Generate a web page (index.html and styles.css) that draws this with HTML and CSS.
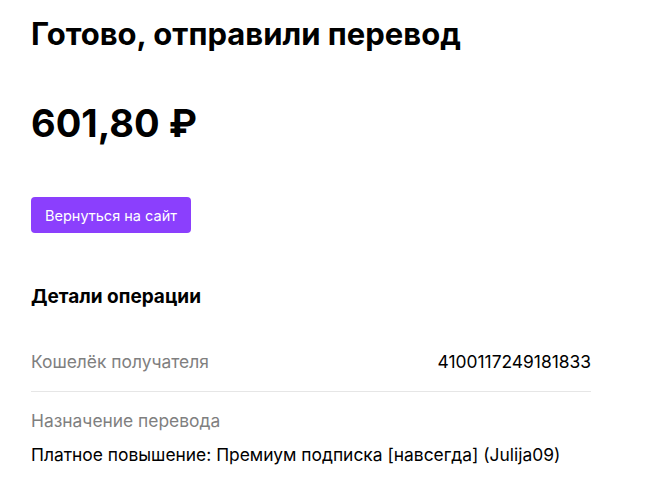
FILE: index.html
```html
<!DOCTYPE html>
<html lang="ru">
<head>
<meta charset="utf-8">
<link rel="stylesheet" href="styles.css">
</head>
<body>
<main class="page">
  <h1 class="title">Готово, отправили перевод</h1>
  <div class="amount">601,80 ₽</div>
  <a class="btn" href="#">Вернуться на сайт</a>
  <h2 class="details-title">Детали операции</h2>
  <div class="details">
    <div class="row row-split">
      <span class="label">Кошелёк получателя</span>
      <span class="value">4100117249181833</span>
    </div>
    <div class="row row-stack">
      <span class="label">Назначение перевода</span>
      <span class="value">Платное повышение: Премиум подписка [навсегда] (Julija09)</span>
    </div>
  </div>
</main>
</body>
</html>
```

FILE: styles.css
```css
* { box-sizing: border-box; }
html, body { margin: 0; padding: 0; background: #fff; }
body {
  font-family: Inter, "Noto Sans", "Liberation Sans", sans-serif;
  color: #000;
}
.page {
  padding: 14px 0 0 31px;
  display: flex;
  flex-direction: column;
  align-items: flex-start;
}
.title {
  margin: 0;
  font-size: 31px;
  line-height: 40px;
  font-weight: 700;
}
.amount {
  margin-top: 46px;
  font-size: 38px;
  line-height: 46px;
  font-weight: 700;
}
.btn {
  margin-top: 51px;
  display: inline-flex;
  align-items: center;
  justify-content: center;
  width: 160px;
  height: 36px;
  background: #8b3ffd;
  color: #fff;
  border-radius: 4px;
  text-decoration: none;
  font-size: 14.5px;
  font-weight: 400;
}
.details-title {
  margin: 52px 0 0 0;
  font-size: 19px;
  line-height: 24px;
  font-weight: 700;
}
.details {
  margin-top: 42px;
  width: 560px;
}
.row { font-size: 17.4px; line-height: 22px; }
.row-split {
  display: flex;
  justify-content: space-between;
  padding-bottom: 18px;
  border-bottom: 1px solid #e6e6e6;
}
.row-stack {
  display: flex;
  flex-direction: column;
  gap: 12px;
  padding-top: 18px;
}
.label { color: #7f7f7f; }
.value { color: #000; }
```
